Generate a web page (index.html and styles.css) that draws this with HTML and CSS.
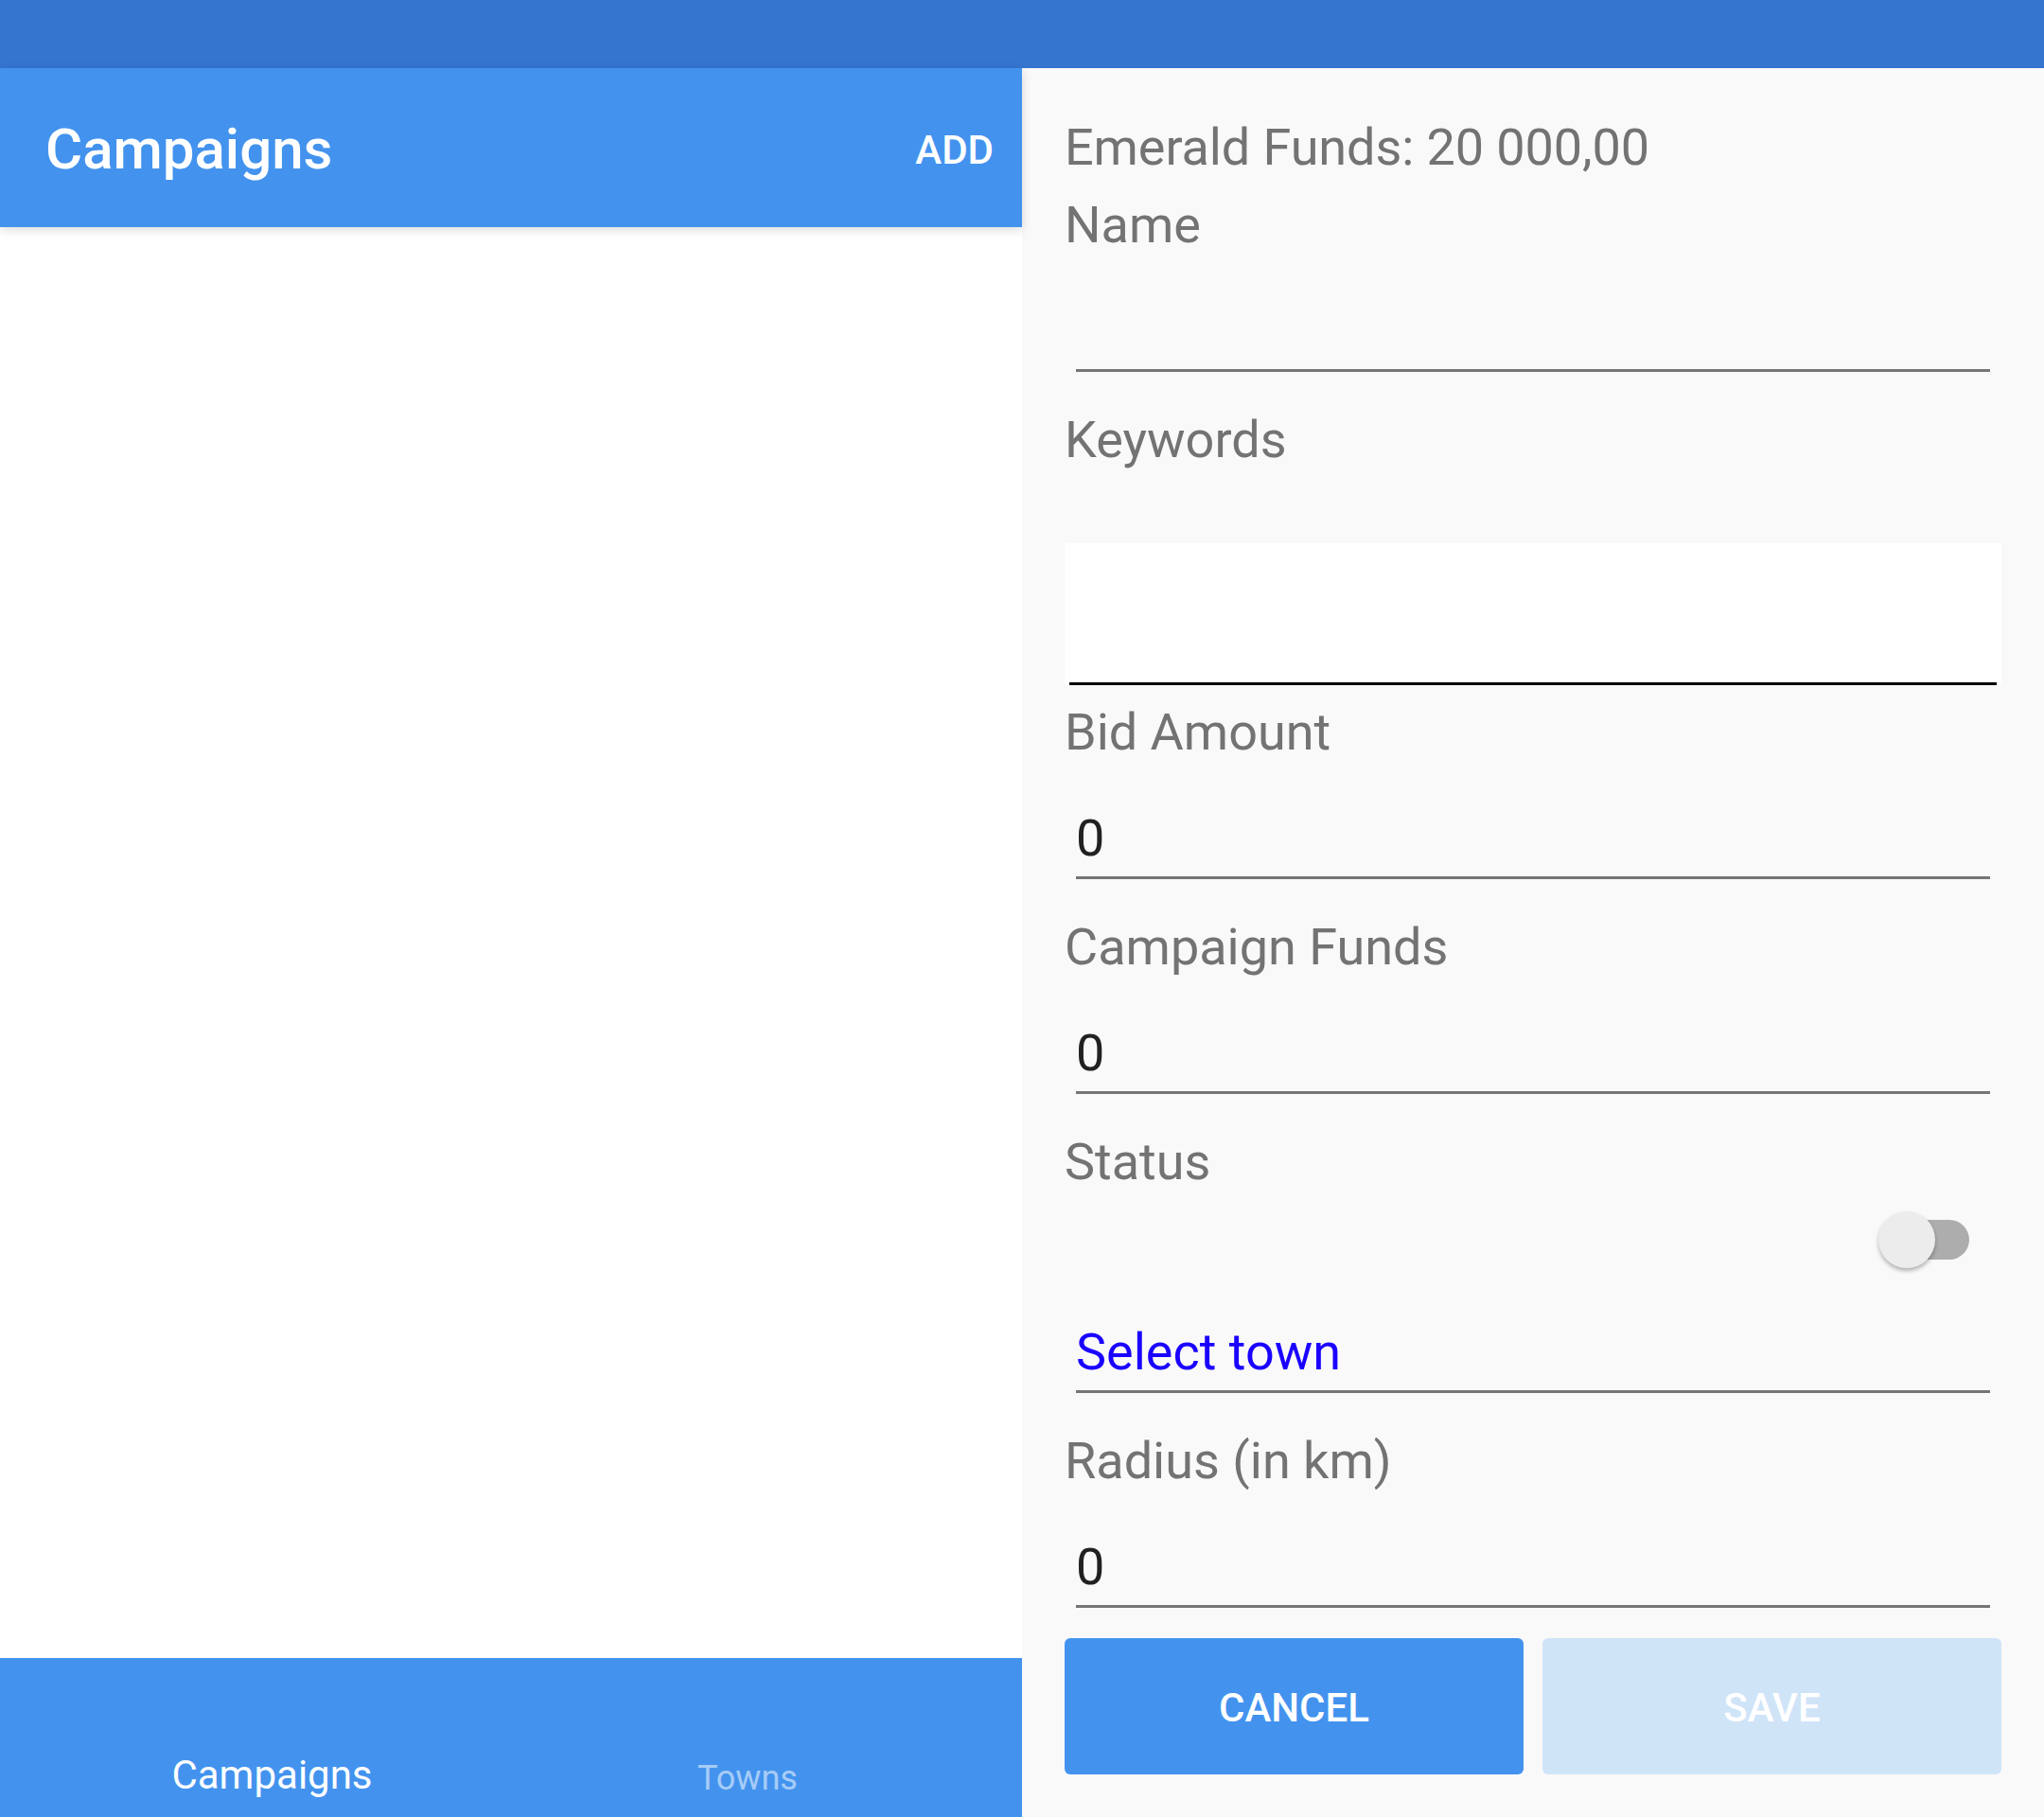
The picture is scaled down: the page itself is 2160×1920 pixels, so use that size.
FILE: index.html
```html
<!DOCTYPE html>
<html lang="en">
<head>
<meta charset="utf-8">
<title>Campaigns</title>
<link rel="stylesheet" href="styles.css">
</head>
<body>
<div class="screen">
  <div class="statusbar"></div>
  <div class="panes">
    <section class="list-pane">
      <header class="appbar">
        <h1 class="appbar-title">Campaigns</h1>
        <span class="appbar-action">ADD</span>
      </header>
      <div class="list-body"></div>
      <nav class="bottom-nav">
        <span class="tab tab-active">Campaigns</span>
        <span class="tab tab-inactive">Towns</span>
      </nav>
    </section>
    <section class="form-pane">
      <div class="label funds">Emerald Funds: 20 000,00</div>
      <div class="label label-first">Name</div>
      <div class="field"><span class="field-text"></span></div>
      <div class="label">Keywords</div>
      <div class="kw-area"><div class="kw-input"></div></div>
      <div class="label label-tight">Bid Amount</div>
      <div class="field"><span class="field-text">0</span></div>
      <div class="label">Campaign Funds</div>
      <div class="field"><span class="field-text">0</span></div>
      <div class="label">Status</div>
      <div class="switch-row">
        <div class="switch">
          <div class="switch-track"></div>
          <div class="switch-thumb"></div>
        </div>
      </div>
      <div class="field field-select"><span class="field-text select-text">Select town</span></div>
      <div class="label">Radius (in km)</div>
      <div class="field"><span class="field-text">0</span></div>
      <div class="buttons">
        <div class="btn btn-cancel">CANCEL</div>
        <div class="btn btn-save">SAVE</div>
      </div>
    </section>
  </div>
</div>
</body>
</html>
```

FILE: styles.css
```css
* {
  box-sizing: border-box;
}

html, body {
  margin: 0;
  padding: 0;
}

body {
  width: 2160px;
  height: 1920px;
  overflow: hidden;
  font-family: Roboto, "Noto Sans", "Liberation Sans", sans-serif;
  background: #f9f9f9;
}

.screen {
  display: flex;
  flex-direction: column;
  width: 2160px;
  height: 1920px;
}

.statusbar {
  height: 72px;
  background: #3574cf;
  flex: none;
}

.panes {
  flex: 1;
  display: grid;
  grid-template-columns: 1080px 1080px;
  min-height: 0;
}

/* Left pane */
.list-pane {
  display: flex;
  flex-direction: column;
  background: #ffffff;
}

.appbar {
  height: 168px;
  flex: none;
  background: #4393ee;
  display: flex;
  align-items: center;
  justify-content: space-between;
  padding: 5px 30px 0 48px;
  box-shadow: 0 3px 10px rgba(0, 0, 0, 0.14);
  position: relative;
  z-index: 1;
}

.appbar-title {
  margin: 0;
  font-size: 60px;
  font-weight: 500;
  line-height: 1.172;
  color: #ffffff;
}

.appbar-action {
  font-size: 42px;
  font-weight: 500;
  line-height: 1.172;
  color: #ffffff;
}

.list-body {
  flex: 1;
  background: #ffffff;
}

.bottom-nav {
  height: 168px;
  flex: none;
  background: #4393ee;
  display: grid;
  grid-template-columns: 575px 430px;
  align-items: end;
  padding-bottom: 20px;
}

.tab {
  text-align: center;
  line-height: 1.172;
}

.tab-active {
  font-size: 42px;
  color: #ffffff;
}

.tab-inactive {
  font-size: 36px;
  color: rgba(255, 255, 255, 0.55);
}

/* Right pane */
.form-pane {
  background: #f9f9f9;
  display: flex;
  flex-direction: column;
  padding: 52px 45px 0 45px;
}

.label {
  font-size: 54px;
  line-height: 64px;
  height: 64px;
  color: #737373;
  margin-top: 40px;
  white-space: nowrap;
}

.funds {
  margin-top: 0;
  letter-spacing: -0.1px;
}

.label-first {
  margin-top: 18px;
}

.label-tight {
  margin-top: 18px;
}

.field {
  margin: 0 12px;
  padding: 48px 0 8px 0;
  border-bottom: 3px solid #757575;
  height: 123px;
}

.field-text {
  display: block;
  font-size: 54px;
  line-height: 64px;
  height: 64px;
  color: #212121;
}

.field-select {
  padding-top: 37px;
  height: 112px;
}

.select-text {
  color: #1a00ff;
}

.kw-area {
  margin-top: 77px;
  height: 150px;
  background: #ffffff;
  padding: 0 5px;
  display: flex;
  align-items: flex-end;
}

.kw-input {
  flex: 1;
  height: 3px;
  background: #000000;
}

.switch-row {
  height: 100px;
  display: flex;
  align-items: center;
  justify-content: flex-end;
  padding-right: 34px;
}

.switch {
  position: relative;
  width: 102px;
  height: 60px;
}

.switch-track {
  position: absolute;
  left: 16px;
  right: 0;
  top: 9px;
  height: 42px;
  border-radius: 21px;
  background: #adadad;
}

.switch-thumb {
  position: absolute;
  left: 6px;
  top: 0;
  width: 60px;
  height: 60px;
  border-radius: 50%;
  background: #ececec;
  box-shadow: 0 3px 4px rgba(0, 0, 0, 0.28);
}

.buttons {
  margin-top: 32px;
  display: grid;
  grid-template-columns: 485px 485px;
  column-gap: 20px;
}

.btn {
  height: 144px;
  border-radius: 6px;
  display: flex;
  align-items: center;
  justify-content: center;
  padding-top: 3px;
  font-size: 42px;
  font-weight: 500;
  line-height: 1.172;
  color: #ffffff;
}

.btn-cancel {
  background: #4393ee;
}

.btn-save {
  background: #d0e4f8;
}
```
